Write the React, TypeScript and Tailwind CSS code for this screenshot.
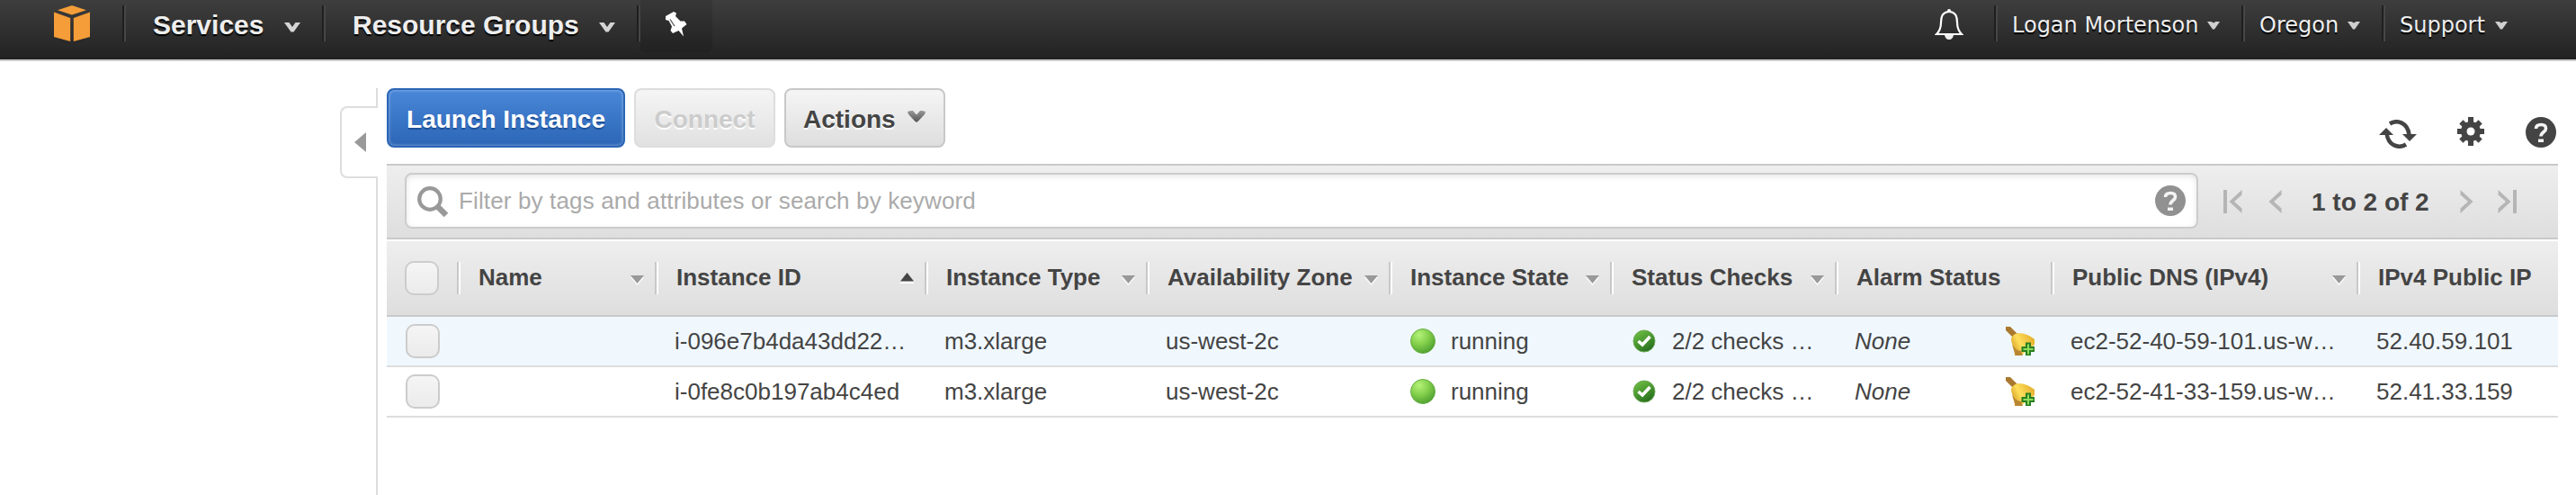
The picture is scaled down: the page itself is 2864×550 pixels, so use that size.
import React from "react";

const columns = [
  { title: "Name", sort: "down" },
  { title: "Instance ID", sort: "up" },
  { title: "Instance Type", sort: "down" },
  { title: "Availability Zone", sort: "down" },
  { title: "Instance State", sort: "down" },
  { title: "Status Checks", sort: "down" },
  { title: "Alarm Status", sort: "" },
  { title: "Public DNS (IPv4)", sort: "down" },
  { title: "IPv4 Public IP", sort: "" },
];

const rows = [
  { id: "i-096e7b4da43dd22…", dns: "ec2-52-40-59-101.us-w…", ip: "52.40.59.101", on: true },
  { id: "i-0fe8c0b197ab4c4ed", dns: "ec2-52-41-33-159.us-w…", ip: "52.41.33.159", on: false },
];

const gridCols = "grid grid-cols-[78px_220px_300px_246px_270px_246px_250px_240px_340px_224px]";

function NavSep() {
  return <div className="h-10 w-1 shrink-0 border-r-2 border-l-2 border-l-[#1f1f1f] border-r-[#464646]" />;
}

function NavCaret({ big }: { big?: boolean }) {
  return big ? (
    <svg className="mt-1 h-[11px] w-[18px]" viewBox="0 0 18 11">
      <path d="M0 0H5.500L9 5 12.500 0H18L10.500 10.500H7.500Z" fill="#d4d4d4" />
    </svg>
  ) : (
    <svg className="h-[9px] w-[14px]" viewBox="0 0 14 9">
      <path d="M0 0H4.500L7 1.500 9.500 0H14L8 8.500H6Z" fill="#cfcfcf" />
    </svg>
  );
}

function HelpIcon({ color }: { color: string }) {
  return (
    <svg className="h-[34px] w-[34px]" viewBox="0 0 34 34">
      <circle cx="17" cy="17" r="17" fill={color} />
      <path d="M11.500 13C11.500 10 13.500 8.500 17.300 8.500c3.500 0 5.200 1.700 5.200 4.200 0 4.200-5.500 4-5.500 8.800" fill="none" stroke="#f4f4f4" strokeWidth="3.600" />
      <rect x="14" y="24.500" width="6" height="3.500" fill="#f4f4f4" />
    </svg>
  );
}

function PageArrow({ flip, bar }: { flip?: boolean; bar?: boolean }) {
  return (
    <svg className={(bar ? "w-[21px]" : "w-[15px]") + " h-[26px]" + (flip ? " -scale-x-100" : "")} viewBox={bar ? "0 0 21 26" : "6 0 15 26"}>
      {bar && <rect width="4" height="26" fill="#b5b5b5" />}
      <path d="M20.500 0V5.500L12 13 20.500 20.500V26L6.500 13Z" fill="#b5b5b5" />
    </svg>
  );
}

function Checkbox() {
  return <div className="h-[38px] w-[38px] rounded-[10px] border-2 border-[#ccc] bg-linear-to-b from-[#f5f5f5] to-[#ebebeb]" />;
}

function SortMark({ dir }: { dir: string }) {
  return (
    <svg className="h-[12px] w-[15px]" viewBox="0 0 15 12">
      {dir === "up" ? (
        <>
          <path d="M0 11H15" stroke="#fff" strokeWidth="2" />
          <path d="M7.500 0L15 9.500H0Z" fill="#444" />
        </>
      ) : (
        <>
          <path d="M15 3L7.500 12 0 3Z" fill="#fff" />
          <path d="M0 1H15L7.500 10Z" fill="#999" />
        </>
      )}
    </svg>
  );
}

function RunningDot() {
  return (
    <svg className="h-[28px] w-[28px]" viewBox="0 0 28 28">
      <defs>
        <radialGradient id="dot" cx=".35" cy=".25" r=".8">
          <stop offset="0" stopColor="#b4f278" />
          <stop offset=".5" stopColor="#83cf4b" />
          <stop offset="1" stopColor="#4c9e2f" />
        </radialGradient>
      </defs>
      <circle cx="14" cy="14" r="13.500" fill="url(#dot)" stroke="#68ad45" />
    </svg>
  );
}

function CheckIcon() {
  return (
    <svg className="h-[26px] w-[26px]" viewBox="0 0 26 26">
      <defs>
        <linearGradient id="chk" x1=".2" y1="0" x2=".8" y2="1">
          <stop offset="0" stopColor="#6fc043" />
          <stop offset="1" stopColor="#22691c" />
        </linearGradient>
      </defs>
      <circle cx="13" cy="13" r="12" fill="url(#chk)" stroke="#6da858" />
      <path d="M6.500 13L11 17 19.500 8" fill="none" stroke="#fff" strokeWidth="3.600" />
    </svg>
  );
}

function AlarmIcon() {
  return (
    <svg className="h-[32px] w-[32px]" viewBox="0 0 32 32">
      <defs>
        <linearGradient id="bell" x1="0" y1=".7" x2="1" y2=".2">
          <stop offset="0" stopColor="#d39c22" />
          <stop offset=".4" stopColor="#ffdf5c" />
          <stop offset="1" stopColor="#e3ad2a" />
        </linearGradient>
      </defs>
      <path d="M0 0H5L13 8 8 12 0 4Z" fill="#a9792f" />
      <path d="M6 13Q8 8 14 7C21 7 27 10 32 14V20L17 32H10C10 24 6 19 6 13Z" fill="url(#bell)" />
      <path d="M7 20L11 32H19L17 27C13 27 10 24 7 20Z" fill="#b98632" />
      <path d="M23 18.500H27V23H31.500V27H27V31.500H23V27H18.500V23H23Z" fill="#8fdc5a" stroke="#2a7f22" strokeWidth="2" />
    </svg>
  );
}

export default function App() {
  return (
    <div className="flex h-[550px] w-[2864px] flex-col overflow-hidden bg-white font-['Liberation_Sans',Arial,sans-serif] text-[26px] leading-[30px] text-[#444]">
      <header className="flex h-[68px] shrink-0 items-start border-b-2 border-[#ccc] bg-linear-to-b from-[#3e3e3e] to-[#222] pt-1.5 text-[#eee] [text-shadow:0_2px_1px_#000]">
        <svg className="ml-[60px] h-10 w-10" viewBox="0 0 40 40">
          <path d="M20 0L36 5.200 20 10.500 4 5.200Z" fill="#f59d38" />
          <path d="M0 7.500L18.200 14V40L0 35Z" fill="#f59d38" />
          <path d="M40 7.500L21.800 14V40L40 35Z" fill="#f59d38" />
        </svg>
        <div className="ml-9"><NavSep /></div>
        <div className="flex h-10 w-[218px] items-center pt-1 pr-6 pl-[30px] text-[30px] font-bold">
          <span className="mr-auto">Services</span>
          <NavCaret big />
        </div>
        <NavSep />
        <div className="flex h-10 w-[346px] items-center pt-1 pr-6 pl-[30px] text-[30px] font-bold">
          <span className="mr-auto">Resource Groups</span>
          <NavCaret big />
        </div>
        <NavSep />
        <div className="-mt-1.5 h-[58px] w-20 rounded-b-md bg-black/10 pt-[13px] pl-[27px]">
          <svg className="h-[28px] w-[25px]" viewBox="0 0 25 28">
            <path d="M1 5L10 0 13 1.500 12 5 17.500 10.500 22 10.500 24.500 14 19 18.500 21 27.500 15.500 21 9 24 6.500 21 8 16.500 4.500 10 1 9Z" fill="#fff" />
            <path d="M6 8.500L11 16" stroke="#555" strokeWidth="1.300" />
          </svg>
        </div>
        <svg className="mt-1 ml-auto h-[34px] w-[32px]" viewBox="0 0 32 34">
          <path d="M16 3C8 3 7 10 7 15 7 21 5 25 2 28H30C27 25 25 21 25 15 25 10 24 3 16 3Z" fill="none" stroke="#fff" strokeWidth="2.200" />
          <path d="M11 29H21Q20 34 16 34T11 29Z" fill="#eee" />
          <circle cx="16" cy="2" r="2" fill="#fff" />
        </svg>
        <div className="flex h-10 items-center pl-[34px] font-['DejaVu_Sans',Verdana,sans-serif] text-[24px]">
          <NavSep />
          <div className="flex w-[271px] items-center pt-1 pr-6 pl-4">
            <span className="mr-auto">Logan Mortenson</span>
            <NavCaret />
          </div>
          <NavSep />
          <div className="flex w-[152px] items-center pt-1 pr-6 pl-4">
            <span className="mr-auto">Oregon</span>
            <NavCaret />
          </div>
          <NavSep />
          <div className="flex w-[212px] items-center pt-1 pr-[76px] pl-4">
            <span className="mr-auto">Support</span>
            <NavCaret />
          </div>
        </div>
      </header>

      <div className="flex flex-1 pt-[30px]">
        <aside className="flex w-[420px] shrink-0 flex-col items-end">
          <div className="h-5 w-0.5 bg-[#ddd]" />
          <div className="flex h-20 w-[42px] items-center rounded-l-lg border-2 border-r-0 border-[#ddd] pt-2 pl-[14px]">
            <svg className="mb-2 h-[22px] w-[13px]" viewBox="0 0 13 22">
              <path d="M13 0V22L0 11Z" fill="#999" />
            </svg>
          </div>
          <div className="w-0.5 flex-1 bg-[#ddd]" />
        </aside>

        <main className="ml-2.5 flex w-[2414px] flex-col">
          <div className="flex h-[84px] items-start">
            <div className="flex gap-[10px] text-[28px] font-bold">
              <button className="h-[66px] w-[265px] rounded-lg border-2 border-[#2a65b6] bg-linear-to-b from-[#4987d8] to-[#2c66b6] pt-[3px] text-white shadow-[inset_0_0_3px_1px_rgba(255,255,255,.3)] [text-shadow:0_2px_1px_#1d4f96]">Launch Instance</button>
              <button className="h-[66px] w-[157px] rounded-lg border-2 border-[#ddd] bg-linear-to-b from-[#f5f5f5] to-[#e1e1e1] pt-[3px] text-[#ccc] [text-shadow:0_2px_0_#fff]">Connect</button>
              <button className="flex h-[66px] w-[179px] items-center rounded-lg border-2 border-[#c8c8c8] bg-linear-to-b from-[#f5f5f5] to-[#dedede] pt-[3px] pl-[19px] [text-shadow:0_2px_0_#fff]">
                Actions
                <svg className="mb-1.5 ml-[13px] h-[13px] w-5" viewBox="0 0 20 13">
                  <defs>
                    <linearGradient id="act" x2="0" y2="1">
                      <stop offset="0" stopColor="#999" />
                      <stop offset="1" stopColor="#555" />
                    </linearGradient>
                  </defs>
                  <path d="M0 1L4 0H6L10 4.500 14 0H16L20 1 19 4 11 12.500H9L1 4Z" fill="url(#act)" />
                </svg>
              </button>
            </div>
            <div className="mt-8 ml-auto flex items-start pr-0.5">
              <svg className="mt-[3px] mr-[45px] h-[32px] w-[42px]" viewBox="0 0 42 32">
                <path d="M12 4.500C20-.5 32 3 33.500 17" fill="none" stroke="#444" strokeWidth="4.500" />
                <path d="M26 16H42L34 24Z" fill="#444" />
                <path d="M30 27.500C22 32.500 10 29 8.500 15" fill="none" stroke="#444" strokeWidth="4.500" />
                <path d="M16 17H0L8 9Z" fill="#444" />
              </svg>
              <svg className="mr-[46px] h-[32px] w-[30px]" viewBox="0 0 30 32">
                <g fill="#444">
                  <rect x="12" width="6" height="32" />
                  <rect y="13" width="30" height="6" />
                  <rect x="12" y="1" width="6" height="30" transform="rotate(45 15 16)" />
                  <rect x="12" y="1" width="6" height="30" transform="rotate(-45 15 16)" />
                  <circle cx="15" cy="16" r="11" />
                </g>
                <circle cx="15" cy="16" r="4.500" fill="#fff" />
              </svg>
              <HelpIcon color="#444" />
            </div>
          </div>

          <div className="flex h-[84px] items-center border-y-2 border-[#c9c9c9] bg-linear-to-b from-[#eee] to-[#dedede] pl-5">
            <div className="mb-[2px] flex h-[62px] w-[1994px] items-center rounded-lg border-2 border-[#ccc] bg-white pr-[12px] pl-[12px] shadow-[inset_0_2px_6px_#e4e4e4]">
              <svg className="mt-0.5 mr-[11px] h-[35px] w-[35px]" viewBox="0 0 35 35">
                <circle cx="14" cy="14" r="11.800" fill="none" stroke="#999" strokeWidth="4.200" />
                <path d="M22 22L32 32" stroke="#999" strokeWidth="6.500" />
              </svg>
              <span className="mr-auto tracking-[0.14px] text-[#aaa]">Filter by tags and attributes or search by keyword</span>
              <HelpIcon color="#919191" />
            </div>
            <div className="flex items-center pl-[28px] text-[28px] font-bold">
              <PageArrow bar />
              <span className="ml-[29px]"><PageArrow /></span>
              <span className="mx-[33px] w-[132px] pt-0.5 whitespace-nowrap">1 to 2 of 2</span>
              <PageArrow flip />
              <span className="ml-[27px]"><PageArrow bar flip /></span>
            </div>
          </div>

          <div className={gridCols + " mt-0.5 h-[84px] border-b-2 border-[#c9c9c9] bg-linear-to-b from-[#eee] to-[#dedede] font-bold"}>
            <div className="pt-[22px] pl-5"><Checkbox /></div>
            {columns.map((c) => (
              <div key={c.title} className="flex pt-[23px]">
                <div className="h-9 w-1 shrink-0 border-l-2 border-r-2 border-l-[#c8c8c8] border-r-white" />
                <span className="-mr-2 pt-[2px] pl-5 whitespace-nowrap">{c.title}</span>
                {c.sort && <span className={c.sort === "up" ? "mt-[12px] mr-[12px] ml-auto" : "mt-[14px] mr-[12px] ml-auto"}><SortMark dir={c.sort} /></span>}
              </div>
            ))}
          </div>

          {rows.map((r) => (
            <div key={r.id} className={gridCols + " h-14 items-center border-b-2 border-[#ddd] whitespace-nowrap " + (r.on ? "bg-[#f0f8fe]" : "bg-white")}>
              <div className="pl-[21px]"><Checkbox /></div>
              <div />
              <div className="pl-[22px]">{r.id}</div>
              <div className="pl-[22px]">m3.xlarge</div>
              <div className="pl-[22px]">us-west-2c</div>
              <div className="flex items-center gap-[17px] pl-6"><RunningDot />running</div>
              <div className="flex items-center gap-[18px] pl-[25px]"><CheckIcon />2/2 checks …</div>
              <div className="flex items-center justify-between pr-[18px] pl-[22px]"><i>None</i><AlarmIcon /></div>
              <div className="pl-[22px]">{r.dns}</div>
              <div className="pl-[22px]">{r.ip}</div>
            </div>
          ))}
          <div className="flex-1" />
        </main>
      </div>
    </div>
  );
}
